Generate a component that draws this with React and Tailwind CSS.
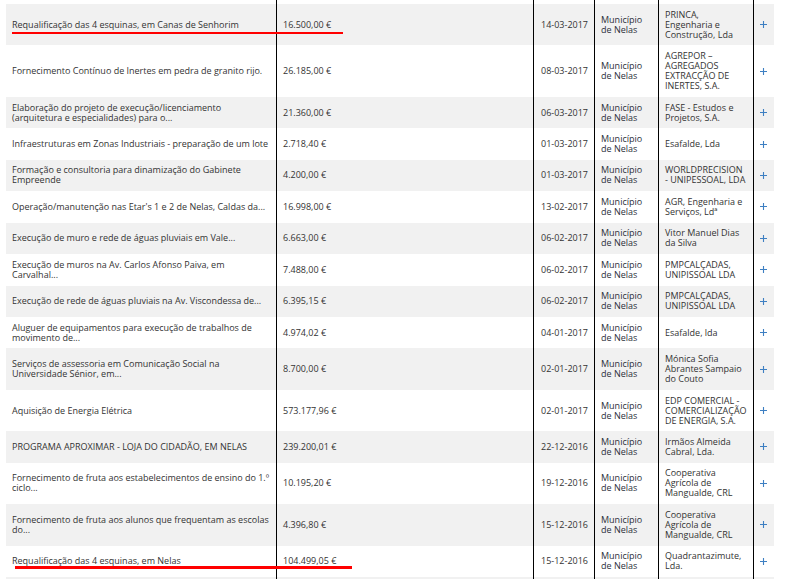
import React from "react";

const rows = [
  { d: ["Requalificação das 4 esquinas, em Canas de Senhorim"], v: "16.500,00 €", dt: "14-03-2017", c: ["PRINCA,", "Engenharia e", "Construção, Lda"] },
  { d: ["Fornecimento Contínuo de Inertes em pedra de granito rijo."], v: "26.185,00 €", dt: "08-03-2017", c: ["AGREPOR –", "AGREGADOS", "EXTRACÇÃO DE", "INERTES, S.A."] },
  { d: ["Elaboração do projeto de execução/licenciamento", "(arquitetura e especialidades) para o..."], v: "21.360,00 €", dt: "06-03-2017", c: ["FASE - Estudos e", "Projetos, S.A."] },
  { d: ["Infraestruturas em Zonas Industriais - preparação de um lote"], v: "2.718,40 €", dt: "01-03-2017", c: ["Esafalde, Lda"] },
  { d: ["Formação e consultoria para dinamização do Gabinete", "Empreende"], v: "4.200,00 €", dt: "01-03-2017", c: ["WORLDPRECISION", "- UNIPESSOAL, LDA"] },
  { d: ["Operação/manutenção nas Etar's 1 e 2 de Nelas, Caldas da..."], v: "16.998,00 €", dt: "13-02-2017", c: ["AGR, Engenharia e", "Serviços, Ldª"] },
  { d: ["Execução de muro e rede de águas pluviais em Vale..."], v: "6.663,00 €", dt: "06-02-2017", c: ["Vitor Manuel Dias", "da Silva"] },
  { d: ["Execução de muros na Av. Carlos Afonso Paiva, em", "Carvalhal..."], v: "7.488,00 €", dt: "06-02-2017", c: ["PMPCALÇADAS,", "UNIPISSOAL LDA"] },
  { d: ["Execução de rede de águas pluviais na Av. Viscondessa de..."], v: "6.395,15 €", dt: "06-02-2017", c: ["PMPCALÇADAS,", "UNIPISSOAL LDA"] },
  { d: ["Aluguer de equipamentos para execução de trabalhos de", "movimento de..."], v: "4.974,02 €", dt: "04-01-2017", c: ["Esafalde, lda"] },
  { d: ["Serviços de assessoria em Comunicação Social na", "Universidade Sénior, em..."], v: "8.700,00 €", dt: "02-01-2017", c: ["Mónica Sofia", "Abrantes Sampaio", "do Couto"] },
  { d: ["Aquisição de Energia Elétrica"], v: "573.177,96 €", dt: "02-01-2017", c: ["EDP COMERCIAL -", "COMERCIALIZAÇÃO", "DE ENERGIA, S.A."] },
  { d: ["PROGRAMA APROXIMAR - LOJA DO CIDADÃO, EM NELAS"], v: "239.200,01 €", dt: "22-12-2016", c: ["Irmãos Almeida", "Cabral, Lda."] },
  { d: ["Fornecimento de fruta aos estabelecimentos de ensino do 1.º", "ciclo..."], v: "10.195,20 €", dt: "19-12-2016", c: ["Cooperativa", "Agrícola de", "Mangualde, CRL"] },
  { d: ["Fornecimento de fruta aos alunos que frequentam as escolas", "do..."], v: "4.396,80 €", dt: "15-12-2016", c: ["Cooperativa", "Agrícola de", "Mangualde, CRL"] },
  { d: ["Requalificação das 4 esquinas, em Nelas"], v: "104.499,05 €", dt: "15-12-2016", c: ["Quadrantazimute,", "Lda."] },
];

function Lines({ items }) {
  return items.map((t, i) => (
    <React.Fragment key={i}>
      {i > 0 && <br />}
      {t}
    </React.Fragment>
  ));
}

function Plus() {
  return (
    <svg width="7" height="7" viewBox="0 0 7 7" className="mx-auto block">
      <path d="M3.5 0V7M0 3.5H7" stroke="#3d7fc2" strokeWidth="1.1" />
    </svg>
  );
}

export default function App() {
  const cell = "align-middle py-[5.72px] whitespace-nowrap";
  return (
    <div
      className="relative w-[791px] h-[579px] overflow-hidden bg-white text-[9px] leading-[10px] text-[#333]"
      style={{ fontFamily: '"Open Sans", "Noto Sans", sans-serif' }}
    >
      <table className="ml-[6px] mt-[4px] w-[768px] table-fixed border-collapse">
        <colgroup>
          <col className="w-[270px]" />
          <col className="w-[257px]" />
          <col className="w-[61px]" />
          <col className="w-[65px]" />
          <col className="w-[94px]" />
          <col className="w-[21px]" />
        </colgroup>
        <tbody>
          {rows.map((r, i) => (
            <tr key={i} className={i % 2 === 0 ? "bg-[#f1f1f1]" : "bg-white"}>
              <td className={`${cell} pl-[6px]`}>
                <Lines items={r.d} />
              </td>
              <td className={`${cell} pl-[7px]`}>{r.v}</td>
              <td className={`${cell} pl-[8px]`}>{r.dt}</td>
              <td className={`${cell} pl-[7px] text-[#2b2f3a]`}>
                Município
                <br />
                de Nelas
              </td>
              <td className={`${cell} pl-[6px]`}>
                <Lines items={r.c} />
              </td>
              <td className={cell}>
                <Plus />
              </td>
            </tr>
          ))}
          <tr className="bg-[#f1f1f1]">
            <td colSpan={6} className="h-[31px]"></td>
          </tr>
        </tbody>
      </table>

      {/* annotation overlay: vertical marker lines drawn over the table */}
      <div className="absolute top-0 bottom-0 left-[276px] w-px bg-black" />
      <div className="absolute top-0 bottom-0 left-[533px] w-px bg-black" />
      <div className="absolute top-0 bottom-0 left-[594px] w-px bg-black" />
      <div className="absolute top-0 bottom-0 left-[658px] w-px bg-black" />
      <div className="absolute top-0 bottom-0 left-[753px] w-px bg-black" />

      {/* annotation overlay: red underlines */}
      <div className="absolute left-[12px] top-[32px] w-[331px] h-[2px] bg-[#f00]" />
      <div className="absolute left-[15px] top-[566px] w-[337px] h-[3px] bg-[#f00]" />
    </div>
  );
}
